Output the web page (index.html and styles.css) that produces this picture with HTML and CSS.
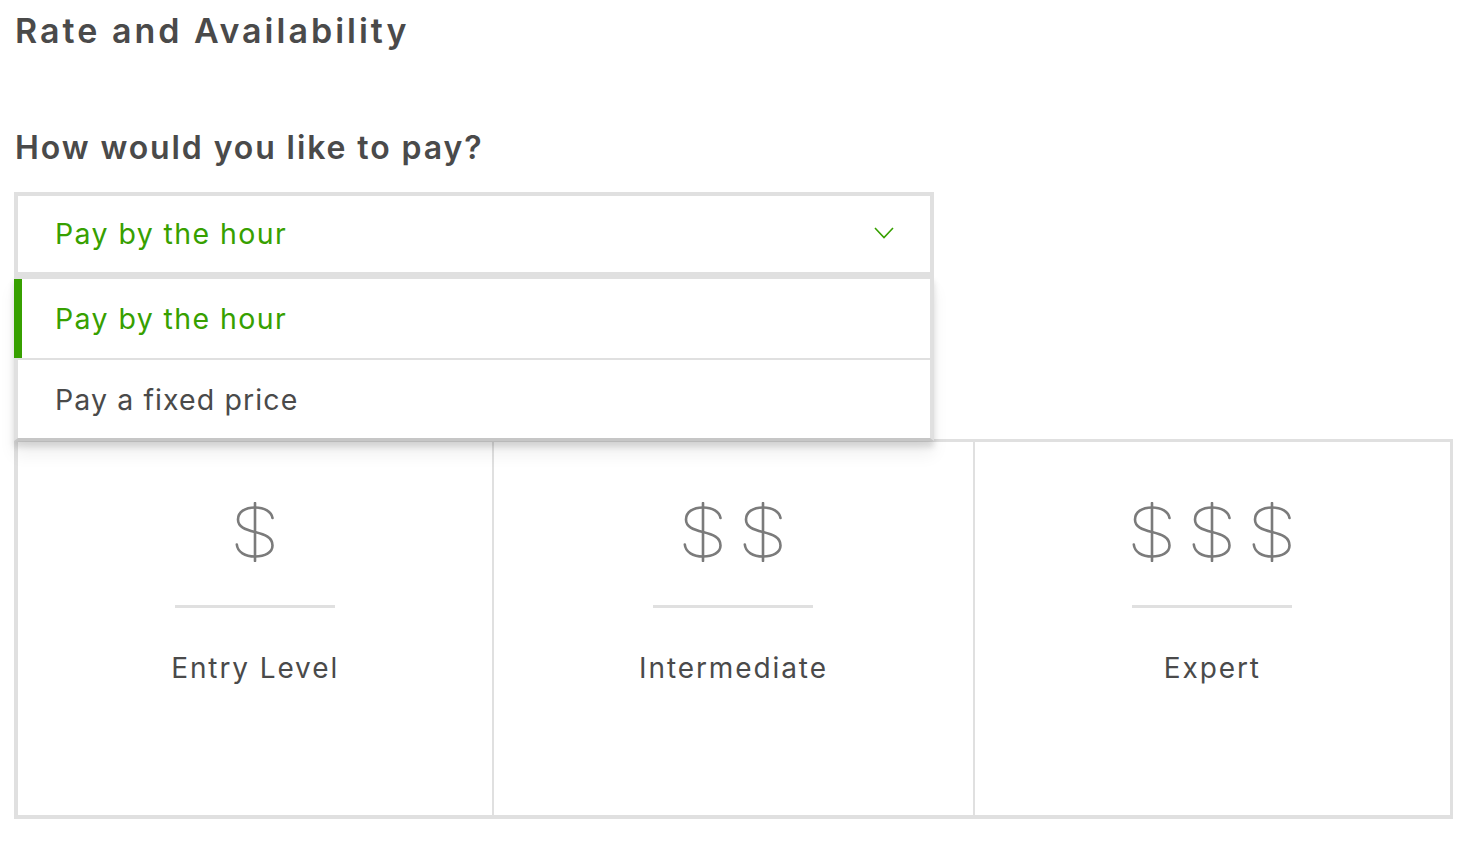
FILE: index.html
```html
<!DOCTYPE html>
<html lang="en">
<head>
<meta charset="utf-8">
<title>Rate and Availability</title>
<link rel="stylesheet" href="styles.css">
</head>
<body>
<main class="page">
  <h1 class="title">Rate and Availability</h1>
  <h2 class="question">How would you like to pay?</h2>

  <div class="select-wrap">
    <div class="select">
      <span class="select-value">Pay by the hour</span>
      <svg class="chevron" width="20" height="12" viewBox="0 0 20 12" aria-hidden="true">
        <polyline points="1,1 10,10.5 19,1" fill="none" stroke="#37a000" stroke-width="1.6"/>
      </svg>
    </div>
    <ul class="menu">
      <li class="menu-item active">Pay by the hour</li>
      <li class="menu-item">Pay a fixed price</li>
    </ul>
  </div>

  <div class="levels">
    <div class="level">
      <div class="dollars">
        <svg class="dollar" width="40" height="60" viewBox="0 0 40 60"><use href="#d"/></svg>
      </div>
      <div class="rule"></div>
      <div class="level-name">Entry Level</div>
    </div>
    <div class="level">
      <div class="dollars">
        <svg class="dollar" width="40" height="60" viewBox="0 0 40 60"><use href="#d"/></svg>
        <svg class="dollar" width="40" height="60" viewBox="0 0 40 60"><use href="#d"/></svg>
      </div>
      <div class="rule"></div>
      <div class="level-name">Intermediate</div>
    </div>
    <div class="level">
      <div class="dollars">
        <svg class="dollar" width="40" height="60" viewBox="0 0 40 60"><use href="#d"/></svg>
        <svg class="dollar" width="40" height="60" viewBox="0 0 40 60"><use href="#d"/></svg>
        <svg class="dollar" width="40" height="60" viewBox="0 0 40 60"><use href="#d"/></svg>
      </div>
      <div class="rule"></div>
      <div class="level-name">Expert</div>
    </div>
  </div>
</main>

<svg width="0" height="0" class="defs" aria-hidden="true">
  <defs>
    <g id="d" fill="none" stroke="#7b7b7b" stroke-width="2.6" stroke-linecap="round">
      <line x1="20" y1="1" x2="20" y2="59"/>
      <path d="M37.5 16 C36.5 9.5 29.5 5.5 20 5.5 C10 5.5 3 10 3 17.5 C3 25 10 27.5 20 30 C30 32.5 37.5 35.5 37.5 43.5 C37.5 50.5 30 54.5 20 54.5 C10 54.5 2.5 50 1.8 42.5"/>
    </g>
  </defs>
</svg>
</body>
</html>
```

FILE: styles.css
```css
* { box-sizing: border-box; }

html, body {
  margin: 0;
  padding: 0;
  background: #ffffff;
}

body {
  font-family: Inter, "Open Sans", "Liberation Sans", sans-serif;
  color: #4a4a4a;
}

.defs { position: absolute; }

.page {
  padding: 11px 25px 0 14px;
}

.title {
  margin: 0 0 0 1px;
  font-size: 34px;
  line-height: 40px;
  font-weight: 600;
  letter-spacing: 3px;
  color: #4a4a4a;
}

.question {
  margin: 78px 0 0 1px;
  font-size: 32px;
  line-height: 38px;
  font-weight: 600;
  letter-spacing: 1.9px;
  color: #4a4a4a;
}

.select-wrap {
  position: relative;
  width: 920px;
  margin-top: 25px;
}

.select {
  display: flex;
  align-items: center;
  justify-content: space-between;
  height: 83px;
  border: 4px solid #e0e0e0;
  border-bottom-width: 3px;
  padding: 0 36px 0 37px;
  background: #fff;
}

.select-value {
  font-size: 28.5px;
  line-height: 34px;
  letter-spacing: 1.4px;
  color: #37a000;
}

.chevron { display: block; margin-top: -2px; }

.menu {
  position: absolute;
  left: 0;
  right: 0;
  top: 100%;
  margin: 0;
  padding: 0;
  list-style: none;
  background: #fff;
  border: 4px solid #e0e0e0;
  border-bottom: 3px solid #c6c6c6;
  box-shadow: 0 6px 6px rgba(0, 0, 0, 0.13), 0 14px 16px rgba(0, 0, 0, 0.06);
  z-index: 2;
}

.menu-item {
  display: flex;
  align-items: center;
  height: 79px;
  padding-left: 37px;
  font-size: 28.5px;
  letter-spacing: 1.1px;
  color: #4a4a4a;
}

.menu-item + .menu-item {
  border-top: 2px solid #e0e0e0;
  height: 80px;
}

.menu-item.active {
  color: #37a000;
  letter-spacing: 1.4px;
  margin-left: -4px;
  border-left: 8px solid #37a000;
  padding-left: 33px;
}

.levels {
  display: grid;
  grid-template-columns: 474fr 480fr 477fr;
  width: 1439px;
  height: 380px;
  margin-top: 164px;
  border: 4px solid #e0e0e0;
  border-top-width: 3px;
  border-right-width: 3px;
}

.level {
  display: flex;
  flex-direction: column;
  align-items: center;
  padding-top: 60px;
}

.level + .level {
  border-left: 2px solid #e0e0e0;
}

.dollars {
  display: flex;
  gap: 20px;
  height: 60px;
}

.dollar { display: block; }

.rule {
  width: 160px;
  height: 3px;
  margin-top: 43px;
  background: #e0e0e0;
}

.level-name {
  margin-top: 44px;
  font-size: 28px;
  line-height: 32px;
  letter-spacing: 1.9px;
  color: #4a4a4a;
}
```
